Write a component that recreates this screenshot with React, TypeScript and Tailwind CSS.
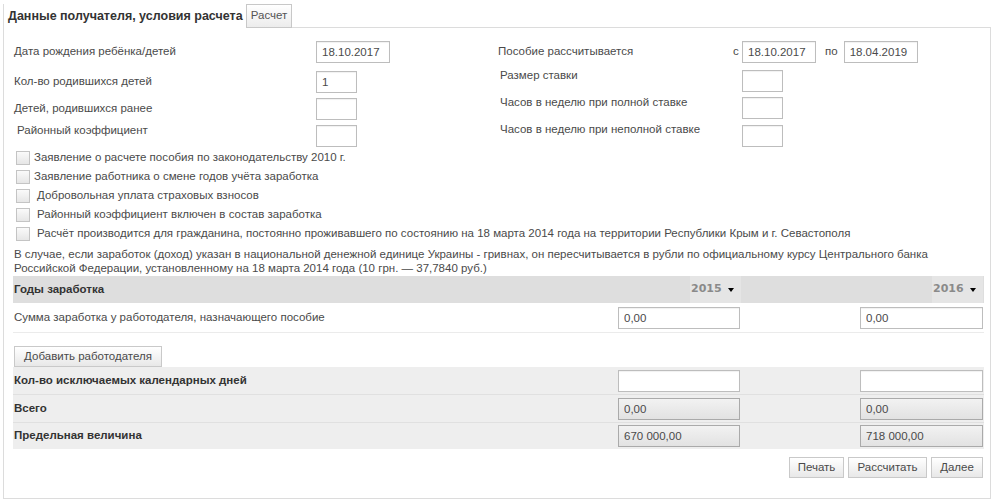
import React from "react";

type FieldProps = {
  value?: string;
  width: string;
  disabled?: boolean;
};

const Field = ({ value = "", width, disabled = false }: FieldProps) => (
  <input
    readOnly
    defaultValue={value}
    className={`${width} h-[22px] flex-none border px-[5px] text-[11.5px] text-[#4a4a4a] outline-none ${
      disabled
        ? "border-[#aaaaaa] bg-gradient-to-b from-[#f2f2f2] to-[#e2e2e2]"
        : "border-[#bdbdbd] bg-white shadow-[inset_0_1px_1px_rgba(0,0,0,0.06)]"
    }`}
  />
);

const Check = ({ label, gap }: { label: string; gap: string }) => (
  <div className="flex h-[19px] items-center pl-[3px]">
    <span className="h-[14px] w-[14px] flex-none border border-[#c4c4c4] bg-gradient-to-b from-[#fafafa] to-[#e6e6e6]" />
    <span className={gap}>{label}</span>
  </div>
);

const YearSelect = ({ year }: { year: string }) => (
  <div className="flex h-full w-[122px] justify-end">
    <div className="flex h-full w-[51px] items-center bg-[#e5e5e5]">
      <span className="pl-[1px] font-['DejaVu_Sans',sans-serif] text-[11px] font-bold text-[#8a8a8a]">
        {year}
      </span>
      <span className="ml-auto mr-[7px] h-0 w-0 border-x-[3px] border-t-[4px] border-x-transparent border-t-black" />
    </div>
  </div>
);

const Button = ({ children, className = "" }: { children: React.ReactNode; className?: string }) => (
  <button
    className={`flex h-[21px] items-center justify-center border border-[#c9c9c9] bg-gradient-to-b from-white to-[#e8e8e8] text-[11.5px] text-[#4a4a4a] ${className}`}
  >
    {children}
  </button>
);

export default function App() {
  return (
    <div className="min-h-[503px] w-[1000px] bg-white pt-[4px] font-['Liberation_Sans',Arial,sans-serif] text-[11.5px] text-[#4a4a4a]">
      <div className="ml-[3px] w-[988px]">
        {/* tabs */}
        <div className="flex h-[24px]">
          <div className="flex w-[240px] items-center border-l border-[#dcdcdc] pl-[4px] text-[12.5px] font-bold text-[#333]">
            Данные получателя, условия расчета
          </div>
          <div className="ml-[3px] flex w-[46px] items-center justify-center border border-[#c8c8c8] bg-gradient-to-b from-white to-[#ececec] text-[#555]">
            Расчет
          </div>
          <div className="flex-1 border-b border-[#dcdcdc]" />
        </div>

        {/* panel */}
        <div className="border-x border-b border-[#dcdcdc] pb-[20px] pl-[9px] pr-[6px] pt-[13px]">
          <div className="flex">
            <div className="flex w-[485px] flex-col">
              <div className="flex h-[21px] items-center">
                <span className="w-[303px] pl-[1px]">Дата рождения ребёнка/детей</span>
                <Field value="18.10.2017" width="w-[74px]" />
              </div>
              <div className="mt-[9px] flex h-[21px] items-center">
                <span className="w-[303px] pl-[1px]">Кол-во родившихся детей</span>
                <Field value="1" width="w-[41px]" />
              </div>
              <div className="mt-[6px] flex h-[21px] items-center">
                <span className="w-[303px] pl-[1px]">Детей, родившихся ранее</span>
                <Field width="w-[41px]" />
              </div>
              <div className="mt-[6px] flex h-[21px] items-start">
                <span className="w-[303px] pl-[4px] leading-[10px]">Районный коэффициент</span>
                <Field width="w-[41px]" />
              </div>
            </div>

            <div className="flex flex-col">
              <div className="flex h-[21px] items-center">
                <span className="w-[235px]">Пособие рассчитывается</span>
                <span className="w-[9px]">с</span>
                <Field value="18.10.2017" width="w-[74px]" />
                <span className="ml-[9px] mr-[6px]">по</span>
                <Field value="18.04.2019" width="w-[74px]" />
              </div>
              <div className="mt-[8px] flex h-[21px] items-start">
                <span className="w-[244px] pl-[2px] leading-[10px]">Размер ставки</span>
                <Field width="w-[41px]" />
              </div>
              <div className="mt-[6px] flex h-[21px] items-start">
                <span className="w-[244px] pl-[2px] leading-[10px]">Часов в неделю при полной ставке</span>
                <Field width="w-[41px]" />
              </div>
              <div className="mt-[7px] flex h-[21px] items-start">
                <span className="w-[244px] pl-[2px] leading-[8px]">Часов в неделю при неполной ставке</span>
                <Field width="w-[41px]" />
              </div>
            </div>
          </div>

          {/* checkboxes */}
          <div className="mt-[2px] flex flex-col">
            <Check gap="pl-[4px]" label="Заявление о расчете пособия по законодательству 2010 г." />
            <Check gap="pl-[4px]" label="Заявление работника о смене годов учёта заработка" />
            <Check gap="pl-[7px]" label="Добровольная уплата страховых взносов" />
            <Check gap="pl-[7px]" label="Районный коэффициент включен в состав заработка" />
            <Check
              gap="pl-[7px]"
              label="Расчёт производится для гражданина, постоянно проживавшего по состоянию на 18 марта 2014 года на территории Республики Крым и г. Севастополя"
            />
          </div>

          <p className="mt-[4px] pl-[1px] leading-[14px]">
            В случае, если заработок (доход) указан в национальной денежной единице Украины - гривнах, он пересчитывается в рубли по официальному курсу Центрального банка
            <br />
            Российской Федерации, установленному на 18 марта 2014 года (10 грн. — 37,7840 руб.)
          </p>

          {/* earnings table */}
          <div className="mt-[1px] flex h-[27px] items-center bg-[#dedede]">
            <span className="flex-1 pl-[1px] font-bold text-[#333]">Годы заработка</span>
            <YearSelect year="2015" />
            <div className="w-[120px]" />
            <YearSelect year="2016" />
            <div className="w-[1px]" />
          </div>
          <div className="flex h-[30px] items-center border-b border-[#ebebeb]">
            <span className="flex-1 pl-[1px]">Сумма заработка у работодателя, назначающего пособие</span>
            <Field value="0,00" width="w-[122px]" />
            <div className="w-[120px]" />
            <Field value="0,00" width="w-[123px]" />
            <div className="w-[1px]" />
          </div>

          <Button className="ml-[1px] mt-[13px] w-[148px]">Добавить работодателя</Button>

          <div className="flex flex-col bg-[#eeeeee]">
            <div className="flex h-[27px] items-center">
              <span className="flex-1 pl-[1px] font-bold text-[#333]">Кол-во исключаемых календарных дней</span>
              <Field width="w-[122px]" />
              <div className="w-[120px]" />
              <Field width="w-[123px]" />
              <div className="w-[1px]" />
            </div>
            <div className="flex h-[28px] items-center border-t border-[#e0e0e0]">
              <span className="flex-1 pl-[1px] font-bold text-[#333]">Всего</span>
              <Field value="0,00" width="w-[122px]" disabled />
              <div className="w-[120px]" />
              <Field value="0,00" width="w-[123px]" disabled />
              <div className="w-[1px]" />
            </div>
            <div className="flex h-[27px] items-center border-t border-[#e0e0e0]">
              <span className="flex-1 pl-[1px] font-bold text-[#333]">Предельная величина</span>
              <Field value="670 000,00" width="w-[122px]" disabled />
              <div className="w-[120px]" />
              <Field value="718 000,00" width="w-[123px]" disabled />
              <div className="w-[1px]" />
            </div>
          </div>

          <div className="mt-[8px] flex justify-end gap-[4px] pr-[1px]">
            <Button className="w-[55px]">Печать</Button>
            <Button className="w-[79px]">Рассчитать</Button>
            <Button className="w-[52px]">Далее</Button>
          </div>
        </div>
      </div>
    </div>
  );
}
